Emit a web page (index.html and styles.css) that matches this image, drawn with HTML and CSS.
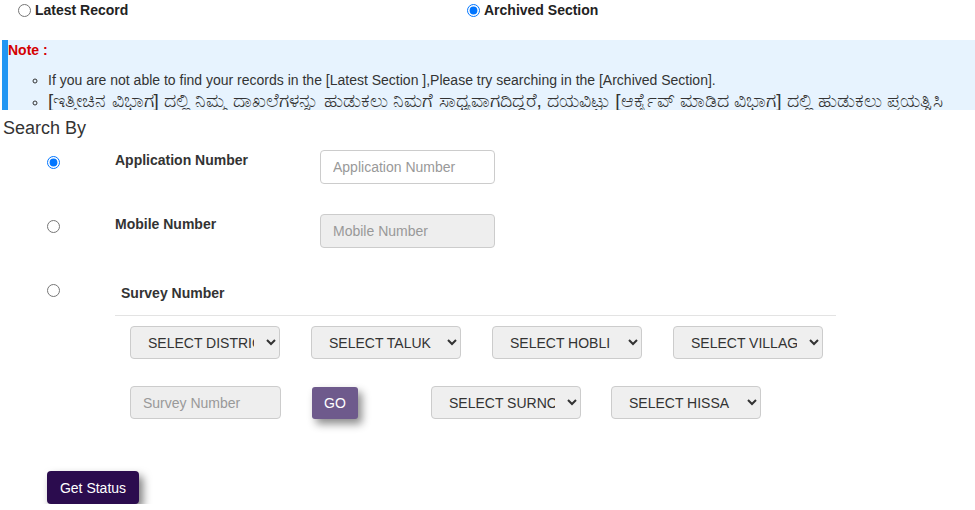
FILE: index.html
```html
<!DOCTYPE html>
<html>
<head>
<meta charset="utf-8">
<link rel="stylesheet" href="styles.css">
</head>
<body>
<div class="mode-row">
  <label class="mode"><input type="radio" name="mode"> Latest Record</label>
  <label class="mode"><input type="radio" name="mode" checked> Archived Section</label>
</div>

<div class="note">
  <p class="note-title">Note :</p>
  <ul class="note-list">
    <li>If you are not able to find your records in the [Latest Section ],Please try searching in the [Archived Section].</li>
    <li class="kn">[ಇತ್ತೀಚಿನ ವಿಭಾಗ] ದಲ್ಲಿ ನಿಮ್ಮ ದಾಖಲೆಗಳನ್ನು ಹುಡುಕಲು ನಿಮಗೆ ಸಾಧ್ಯವಾಗದಿದ್ದರೆ, ದಯವಿಟ್ಟು [ಆರ್ಕೈವ್ ಮಾಡಿದ ವಿಭಾಗ] ದಲ್ಲಿ ಹುಡುಕಲು ಪ್ರಯತ್ನಿಸಿ</li>
  </ul>
</div>

<div class="search-title">Search By</div>

<div class="opt-row">
  <input class="opt-radio" type="radio" name="by" checked>
  <label class="opt-label">Application Number</label>
  <input class="field" type="text" placeholder="Application Number">
</div>
<div class="opt-row">
  <input class="opt-radio" type="radio" name="by">
  <label class="opt-label">Mobile Number</label>
  <input class="field disabled" type="text" placeholder="Mobile Number" disabled>
</div>
<div class="opt-row survey-row">
  <input class="opt-radio" type="radio" name="by">
  <label class="opt-label survey-label">Survey Number</label>
</div>
<div class="survey-rule"></div>

<div class="sel-grid">
  <select class="sel"><option>SELECT DISTRICT</option></select>
  <select class="sel"><option>SELECT TALUK</option></select>
  <select class="sel"><option>SELECT HOBLI</option></select>
  <select class="sel"><option>SELECT VILLAGE</option></select>
</div>
<div class="sel-grid second">
  <input class="field survey-field" type="text" placeholder="Survey Number" disabled>
  <div class="go-cell"><button class="go-btn">GO</button></div>
  <select class="sel"><option>SELECT SURNOC</option></select>
  <select class="sel"><option>SELECT HISSA</option></select>
</div>

<div class="status-wrap">
  <button class="status-btn">Get Status</button>
</div>
</body>
</html>
```

FILE: styles.css
```css
html, body {
  margin: 0;
  padding: 0;
  background: #fff;
  font-family: "Liberation Sans", Arial, "Noto Sans", sans-serif;
  color: #333;
  font-size: 14px;
}

.mode-row {
  display: flex;
  height: 20px;
  padding-left: 13px;
}
.mode {
  display: flex;
  align-items: center;
  width: 449px;
  font-weight: bold;
  font-size: 14px;
  color: #222;
  height: 20px;
}
.mode input {
  margin: 0 4px 0 5px;
  width: 13px;
  height: 13px;
}

.note {
  margin: 20px 0 0 2px;
  height: 70px;
  box-sizing: border-box;
  overflow: hidden;
  background: #e7f3fe;
  border-left: 6px solid #2196f3;
  padding: 1px 0 0 0;
}
.note-title {
  margin: 0;
  line-height: 18px;
  font-weight: bold;
  color: #d40000;
  font-size: 14px;
}
.note-list {
  margin: 10px 0 0 0;
  padding-left: 40px;
  list-style: circle;
  white-space: nowrap;
  color: #333;
  font-size: 14px;
}
.note-list li {
  line-height: 22px;
  height: 22px;
}
.note-list li.kn {
  font-size: 19px;
  line-height: 19px;
  height: 19px;
}
.note-list li.kn::marker {
  font-size: 14px;
}

.search-title {
  font-size: 18px;
  line-height: 21px;
  margin: 8px 0 0 3px;
  color: #333;
}

.opt-row {
  display: flex;
  align-items: flex-start;
  height: 64px;
}
.search-title + .opt-row { margin-top: 11px; }
.opt-radio {
  margin: 6px 0 0 47px;
  width: 13px;
  height: 13px;
}
.opt-label {
  width: 205px;
  margin-left: 55px;
  line-height: 20px;
  font-weight: bold;
  font-size: 14px;
  color: #333;
}
.survey-row { height: 37px; }
.survey-label {
  margin-top: 5px;
  padding-left: 6px;
}

.field {
  box-sizing: border-box;
  width: 175px;
  height: 34px;
  border: 1px solid #ccc;
  border-radius: 4px;
  padding: 0 12px;
  font-family: "Liberation Sans", Arial, sans-serif;
  font-size: 14px;
  color: #555;
  background: #fff;
}
.field::placeholder { color: #999; }
.field.disabled, .field:disabled { background: #eee; }

.survey-rule {
  margin-left: 115px;
  width: 721px;
  border-top: 1px solid #e3e3e3;
}

.sel-grid {
  display: grid;
  grid-template-columns: repeat(4, 150px);
  column-gap: 31px;
  margin: 10px 0 0 130px;
}
.sel-grid.second {
  grid-template-columns: 151px 90px 150px 150px;
  column-gap: 30px;
  margin-top: 27px;
}
.sel {
  box-sizing: border-box;
  width: 150px;
  height: 33px;
  border: 1px solid #ccc;
  border-radius: 4px;
  background-color: #efefef;
  color: #333;
  font-family: "Liberation Sans", Arial, sans-serif;
  font-size: 14px;
  padding: 0 9px 0 13px;
}
.survey-field {
  width: 151px;
  height: 33px;
  background: #eee;
}
.go-cell {
  padding-left: 1px;
}
.go-btn {
  width: 46px;
  height: 32px;
  border: none;
  border-radius: 3px;
  background: #6e5a8c;
  color: #fff;
  font-family: "Liberation Sans", Arial, sans-serif;
  font-size: 14px;
  box-shadow: 4px 5px 8px rgba(0, 0, 0, 0.45);
  margin-top: 1px;
}

.status-wrap {
  margin: 52px 0 0 47px;
}
.status-btn {
  width: 92px;
  height: 33px;
  border: none;
  border-radius: 4px;
  background: #2b0c4e;
  color: #fff;
  font-family: "Liberation Sans", Arial, sans-serif;
  font-size: 14px;
  box-shadow: 4px 5px 8px rgba(0, 0, 0, 0.5);
}
```
